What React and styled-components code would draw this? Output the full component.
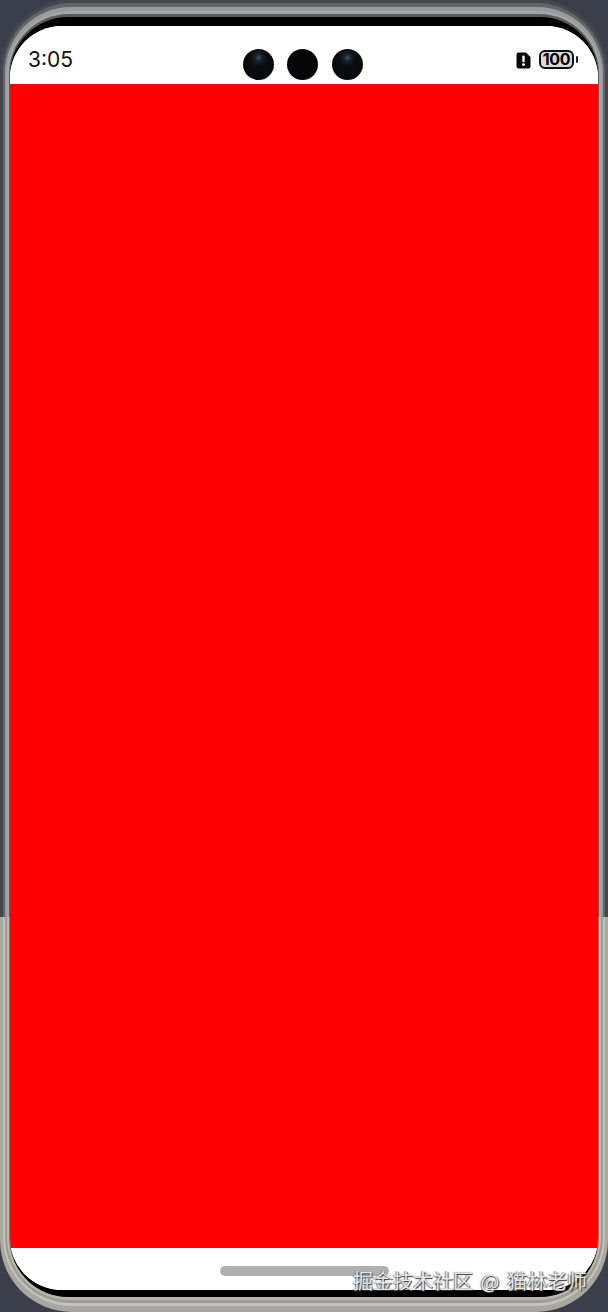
import React from 'react';
import styled, { createGlobalStyle } from 'styled-components';

const Global = createGlobalStyle`
  html, body { margin: 0; padding: 0; background: #3a3f4b; }
  * { box-sizing: border-box; }
`;

const Page = styled.div`
  position: relative;
  width: 608px;
  height: 1312px;
  background: #3a3f4b;
  overflow: hidden;
`;

const Ring = styled.div`
  width: 100%;
  height: 100%;
  padding: ${p => p.$pad};
  border-radius: ${p => p.$radius}px;
  background: linear-gradient(180deg, ${p => p.$top} 0, ${p => p.$top} 917px, ${p => p.$bottom} 917px, ${p => p.$bottom} 100%) fixed;
`;

const Rim = styled.div`
  width: 100%;
  height: 100%;
  padding: 9px 0 7px;
  border-radius: 58px;
  background: #000;
`;

const Screen = styled.main`
  width: 100%;
  height: 100%;
  display: flex;
  flex-direction: column;
  background: #fff;
  border-radius: 52px;
  overflow: hidden;
  font-family: Inter, "Liberation Sans", sans-serif;
`;

const StatusBar = styled.header`
  height: 58px;
  flex: none;
  display: grid;
  grid-template-columns: 1fr auto 1fr;
  align-items: center;
  padding: 11px 24px 2px 18px;
  background: #fff;
`;

const Clock = styled.span`
  font-size: 21px;
  line-height: 1;
  color: #111;
`;

const Cameras = styled.div`
  display: flex;
  gap: 13.5px;
  margin-top: 10px;
  margin-left: 3px;
`;

const Camera = styled.span`
  width: 31px;
  height: 31px;
  border-radius: 50%;
  background: ${p => p.$lit
    ? 'radial-gradient(circle at 50% 28%, #3f5360 0, #18212a 13%, #0a0c11 32%, #060608 100%)'
    : '#060608'};
`;

const Indicators = styled.div`
  display: flex;
  justify-content: flex-end;
  align-items: center;
  gap: 8px;
`;

const Battery = styled.div`
  position: relative;
  width: 35px;
  height: 19px;
  border: 2px solid #111;
  border-radius: 6px;
  background: #d9d9d9;
  color: #000;
  font-family: Inter, "Liberation Sans", sans-serif;
  font-weight: 700;
  font-size: 16px;
  line-height: 15px;
  text-align: center;
  letter-spacing: -0.3px;

  &::after {
    content: '';
    position: absolute;
    right: -6px;
    top: 4px;
    width: 2px;
    height: 7px;
    border-radius: 1px;
    background: #222;
  }
`;

const Content = styled.section`
  flex: 1;
  background: #ff0000;
`;

const BottomBar = styled.footer`
  height: 42px;
  flex: none;
  display: flex;
  background: #fff;
  padding-top: 18px;
  padding-left: 210px;
`;

const HomeIndicator = styled.div`
  width: 169px;
  height: 10px;
  border-radius: 5px;
  background: #b0b0b0;
`;

const Watermark = styled.div`
  position: absolute;
  left: 353px;
  top: 1268px;
  font-family: "Noto Sans CJK SC", sans-serif;
  font-size: 20px;
  line-height: 26px;
  word-spacing: 3px;
  white-space: nowrap;
  color: #e8e8e8;
  text-shadow: 1px 1px 1px #333, -1px 0 1px #777;
`;

const AlertWrap = styled.span`
  display: flex;
  margin-top: 1px;
  margin-left: 1px;
`;

const AlertIcon = () => (
  <AlertWrap>
    <svg width="15" height="17" viewBox="0 0 15 17" aria-hidden="true">
      <path d="M2.5 0.5H10L14.5 5V14.5a2 2 0 0 1-2 2h-10a2 2 0 0 1-2-2v-12a2 2 0 0 1 2-2z" fill="#0a0a0a" />
      <rect x="6.3" y="3.6" width="2.4" height="6.6" rx="1" fill="#fff" />
      <circle cx="7.5" cy="12.6" r="1.4" fill="#fff" />
    </svg>
  </AlertWrap>
);

export default function App() {
  return (
    <>
      <Global />
      <Page>
        <Ring $pad="3px 3px 6px" $radius={72} $top="#46484d" $bottom="#a9a8a0">
          <Ring $pad="4px 2px 3px" $radius={69} $top="#626468" $bottom="#c4c3ba">
            <Ring $pad="4px 2px 3px" $radius={66} $top="#9a9b9d" $bottom="#9c9b94">
              <Ring $pad="3px 2px 3px" $radius={63} $top="#a4a5a7" $bottom="#b9b8af">
                <Ring $pad="3px 1px 0" $radius={60} $top="#5a5b5e" $bottom="#77767a">
                  <Rim>
                    <Screen>
                      <StatusBar>
                        <Clock>3:05</Clock>
                        <Cameras>
                          <Camera $lit />
                          <Camera />
                          <Camera $lit />
                        </Cameras>
                        <Indicators>
                          <AlertIcon />
                          <Battery>100</Battery>
                        </Indicators>
                      </StatusBar>
                      <Content />
                      <BottomBar>
                        <HomeIndicator />
                      </BottomBar>
                    </Screen>
                  </Rim>
                </Ring>
              </Ring>
            </Ring>
          </Ring>
        </Ring>
        <Watermark>掘金技术社区 @ 猫林老师</Watermark>
      </Page>
    </>
  );
}
